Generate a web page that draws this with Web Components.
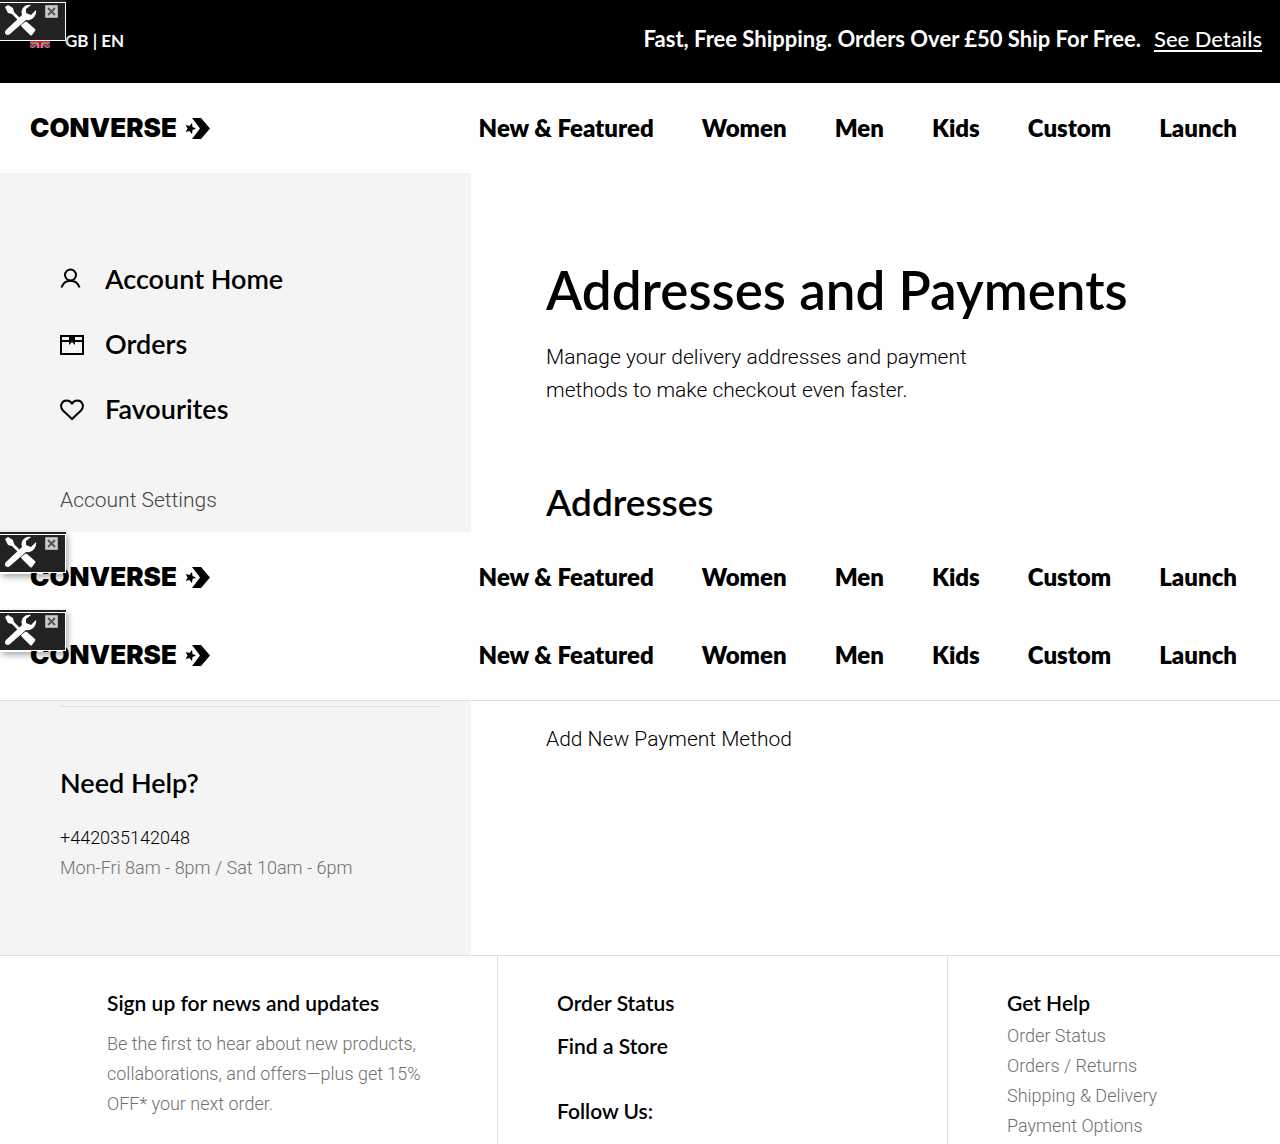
<!DOCTYPE html>
<html lang="en-GB">
<head>
<meta charset="utf-8">
<meta name="viewport" content="width=device-width, initial-scale=1">
<title>Addresses and Payments | Converse</title>
<style>
  body {
    --display: Lato, "Liberation Sans", sans-serif;
    --light: Roboto, "Liberation Sans", sans-serif;
    --line: #dfdfdf;
    --panel: #f4f4f4;
    --muted: #707070;
    margin: 0;
    min-height: 100vh;
    display: flex;
    flex-direction: column;
    background: #fff;
    color: #000;
    font: 600 21px/30px var(--display);
  }
</style>
</head>
<body>
<promo-bar><tool-badge></tool-badge></promo-bar>
<site-header></site-header>
<account-layout>
  <account-menu slot="side"></account-menu>
  <account-intro></account-intro>
</account-layout>
<site-header class="short"><tool-badge></tool-badge></site-header>
<site-header class="ruled"><tool-badge></tool-badge></site-header>
<account-layout>
  <help-panel slot="side"></help-panel>
  <payment-panel></payment-panel>
</account-layout>
<site-footer></site-footer>

<script>
const define = (name, html) => {
  const template = document.createElement('template');
  template.innerHTML = '<style>*{box-sizing:border-box}a{color:inherit;text-decoration:none}ul{list-style:none;margin:0;padding:0}h1,h2,h3,p{margin:0;font:inherit}</style>' + html;
  customElements.define(name, class extends HTMLElement {
    constructor() {
      super();
      this.attachShadow({ mode: 'open' }).append(template.content.cloneNode(true));
    }
  });
};

define('tool-badge', `
<style>
  :host { position: absolute; left: 0; top: 0; z-index: 2; display: block; box-sizing: border-box; width: 66px; height: 42px; border-top: 2px solid #222; box-shadow: 2px 3px 6px #0005; }
  .box { display: flex; height: 39px; padding: 1px 7px 0 4px; justify-content: space-between; align-items: flex-start; background: #222; border: 1px solid #fff; border-left: 0; }
  button { display: block; margin: 1px 0 0; padding: 0; border: 0; background: none; }
  svg { display: block; }
</style>
<div class="box">
  <svg width="34" height="34" viewBox="0 0 34 34" fill="#fff" aria-hidden="true">
    <path d="M1 3 4 1l5 3 1 4 9 9-2 2-9-9-4-1z"/>
    <path d="m17 21 4-3q1-1 2 0l8 7q1 1 0 2l-3 4q-1 1-2 0l-8-8q-1-1-1-2z"/>
    <path d="M27 1c-6-1-11 4-9 10L2 26c-3 3 1 7 4 4l16-14c6 1 11-4 10-10l-5 5-5-2 0-4z"/>
  </svg>
  <button type="button" aria-label="Close tools">
    <svg width="13" height="13" viewBox="0 0 13 13" aria-hidden="true"><rect width="13" height="13" rx="1" fill="#aaa"/><path d="M1 1h11v11H1z" fill="#ccc"/><path d="m3 3 7 7m0-7-7 7" stroke="#555" stroke-width="2"/></svg>
  </button>
</div>`);

define('promo-bar', `
<style>
  :host { position: relative; display: flex; box-sizing: border-box; justify-content: space-between; align-items: flex-start; padding: 24px 18px 27px 30px; background: #000; color: #fff; font-weight: 700; font-size: 22px; }
  .locale { display: flex; align-items: center; gap: 15px; padding-top: 2px; font-size: 17px; }
  .promo { display: flex; gap: 13px; }
  .promo a { font-weight: 500; text-decoration: underline; text-decoration-thickness: 2px; text-underline-offset: 3px; }
  svg { display: block; }
</style>
<slot></slot>
<a class="locale" href="#locale">
  <svg width="20" height="14" viewBox="0 0 20 14" aria-hidden="true"><path fill="#1b2a7a" d="M0 0h20v14H0z"/><path d="m0 0 20 14M20 0 0 14" stroke="#fff" stroke-width="3"/><path d="m0 0 20 14M20 0 0 14" stroke="#d22" stroke-width="2"/><path d="M10 0v14M0 7h20" stroke="#fff" stroke-width="5"/><path d="M10 0v14M0 7h20" stroke="#d22" stroke-width="3"/></svg>
  <span>GB | EN</span>
</a>
<div class="promo"><span>Fast, Free Shipping. Orders Over £50 Ship For Free.</span><a href="#details">See Details</a></div>`);

define('brand-logo', `
<style>
  :host { display: block; }
  a { display: flex; justify-content: space-between; align-items: center; width: 180px; font: 900 26px/30px Inter, sans-serif; }
  svg { display: block; }
</style>
<a href="#home">CONVERSE<svg width="25" height="21" viewBox="0 0 25 21" aria-hidden="true"><path d="M7 0h9l9 10.500L16 21H7l8-10.500z"/><path d="m7 5 .5 4 3.500 1.500L7.500 12 7 16l-2.600-3L.6 14l2-3.500-2-3.500 3.800 1z"/></svg></a>`);

define('site-header', `
<style>
  :host { position: relative; display: block; background: #fff; }
  :host(.short) .bar { padding-bottom: 18px; }
  :host(.ruled) { border-bottom: 1px solid var(--line); }
  .bar { display: flex; justify-content: space-between; align-items: center; padding: 30px 43px 30px 30px; }
  ul { display: flex; gap: 48px; font-weight: 800; font-size: 24px; }
</style>
<slot></slot>
<div class="bar">
  <brand-logo></brand-logo>
  <nav aria-label="Main"><ul>
    <li><a href="#new">New &amp; Featured</a></li><li><a href="#women">Women</a></li><li><a href="#men">Men</a></li>
    <li><a href="#kids">Kids</a></li><li><a href="#custom">Custom</a></li><li><a href="#launch">Launch</a></li>
  </ul></nav>
</div>`);

define('account-layout', `
<style>
  :host { display: flex; }
  aside { flex: 0 0 36.8%; box-sizing: border-box; padding: 0 31px 0 60px; background: var(--panel); }
  main { flex: 1; padding-left: 75px; }
</style>
<aside><slot name="side"></slot></aside>
<main><slot></slot></main>`);

define('account-menu', `
<style>
  :host { display: block; padding: 73px 0 17px; }
  li a { display: flex; align-items: center; gap: 21px; height: 65px; font-size: 27px; }
  svg { display: block; fill: none; stroke: #000; stroke-width: 2; }
  .settings { display: block; margin-top: 44px; color: #444; font: 300 21px/30px var(--light); }
</style>
<nav aria-label="Account">
  <ul>
    <li><a href="#account"><svg width="24" height="24" viewBox="0 0 24 24" aria-hidden="true"><circle cx="10.500" cy="8" r="5.500"/><path d="M1.500 20.500c3-9 15-9 18 0"/></svg>Account Home</a></li>
    <li><a href="#orders"><svg width="24" height="24" viewBox="0 0 24 24" aria-hidden="true"><path d="M1 4h22v18H1zM1 9h22"/><path fill="#000" stroke="none" d="M9 4h6v9l-3-3-3 3z"/></svg>Orders</a></li>
    <li><a href="#favourites"><svg width="24" height="24" viewBox="0 0 24 24" aria-hidden="true"><path d="M12 22 3 13.500C-1 9 2 3.500 6.500 3.500c3 0 4.500 1.500 5.500 3 1-1.500 2.500-3 5.500-3C22 3.500 25 9 21 13.500z"/></svg>Favourites</a></li>
  </ul>
  <a class="settings" href="#settings">Account Settings</a>
</nav>`);

define('account-intro', `
<style>
  :host { display: block; padding: 85px 0 8px; }
  h1 { font-size: 53px; line-height: 64px; }
  p { max-width: 450px; margin-top: 19px; font: 300 21px/33px var(--light); }
  h2 { margin-top: 73px; font-size: 37px; line-height: 44px; }
</style>
<h1>Addresses and Payments</h1>
<p>Manage your delivery addresses and payment methods to make checkout even faster.</p>
<h2>Addresses</h2>`);

define('help-panel', `
<style>
  :host { display: block; padding: 5px 0 72px; }
  hr { margin: 0; border: 0; border-top: 1px solid var(--line); }
  h2 { margin: 61px 0 25px; font-size: 27px; }
  p, a { display: block; font: 300 18px/30px var(--light); }
  p { color: var(--muted); }
</style>
<hr>
<h2>Need Help?</h2>
<a href="tel:+442035142048">+442035142048</a>
<p>Mon-Fri 8am - 8pm / Sat 10am - 6pm</p>`);

define('payment-panel', `
<style>
  :host { display: block; padding-top: 22px; }
  a { font: 300 21px/30px var(--light); }
</style>
<a href="#add-payment">Add New Payment Method</a>`);

define('footer-links', `
<style>
  :host { display: block; color: var(--muted); font: 300 18px/30px var(--light); }
  h3 { margin-bottom: 3px; color: #000; font: 600 21px/30px var(--display); }
</style>
<h3>Get Help</h3>
<ul>
  <li><a href="#order-status">Order Status</a></li>
  <li><a href="#returns">Orders / Returns</a></li>
  <li><a href="#shipping">Shipping &amp; Delivery</a></li>
  <li><a href="#payment">Payment Options</a></li>
</ul>`);

define('site-footer', `
<style>
  :host { flex: 1; display: grid; grid-template-columns: 498fr 450fr 332fr; border-top: 1px solid var(--line); }
  section { padding: 32px 0 0 59px; border-right: 1px solid var(--line); }
  section:first-of-type { padding-left: 107px; }
  section:last-of-type { border: 0; }
  p { max-width: 330px; margin-top: 11px; color: var(--muted); font: 300 18px/30px var(--light); }
  a, h3 { display: block; }
  a + a { margin-top: 13px; }
  a + h3 { margin-top: 35px; }
</style>
<section><h3>Sign up for news and updates</h3><p>Be the first to hear about new products, collaborations, and offers—plus get 15% OFF* your next order.</p></section>
<section><a href="#status">Order Status</a><a href="#stores">Find a Store</a><h3>Follow Us:</h3></section>
<section><footer-links></footer-links></section>`);
</script>
</body>
</html>
